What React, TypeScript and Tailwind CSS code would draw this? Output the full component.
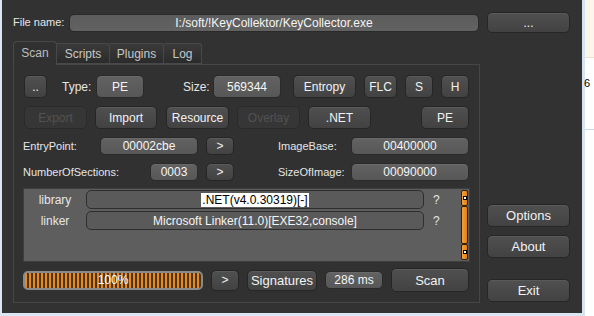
import React from "react";

const FONT = { fontFamily: '"Liberation Sans", Arial, sans-serif' };

function Btn({ cls, children, kind = "btn" }: { cls: string; children?: React.ReactNode; kind?: "btn" | "field" | "off" }) {
  const base =
    kind === "btn"
      ? "bg-[linear-gradient(#505050,#424242)] border-[#262626] text-[#f2f2f2] rounded-[5px] shadow-[inset_0_1px_0_#5a5a5a]"
      : kind === "field"
      ? "bg-[linear-gradient(#626262,#575757)] border-[#2a2a2a] text-[#f5f5f5] rounded-[5px] shadow-[inset_0_1px_0_#6a6a6a]"
      : "bg-[#363636] border-[#2a2a2a] text-[#525252] rounded-[5px]";
  return (
    <div className={`flex items-center justify-center border text-[12px] leading-none shrink-0 whitespace-nowrap ${base} ${cls}`}>
      {children}
    </div>
  );
}

function Label({ cls, children }: { cls: string; children: React.ReactNode }) {
  return <div className={`text-[11px] text-[#e6e6e6] leading-none shrink-0 whitespace-nowrap ${cls}`}>{children}</div>;
}

function ScrollSeg({ cls, dot }: { cls: string; dot?: boolean }) {
  return (
    <div className={`w-[7px] rounded-[2px] border border-[#3a2206] bg-[linear-gradient(90deg,#f4a23a,#e0801a)] flex items-center justify-center ${cls}`}>
      {dot && (
        <div className="w-[4px] h-[4px] bg-black flex items-center justify-center">
          <div className="w-[2px] h-[2px] bg-white" />
        </div>
      )}
    </div>
  );
}

export default function App() {
  return (
    <div style={FONT} className="w-[594px] h-[316px] bg-[#dae6f3] flex overflow-hidden">
      <div className="ml-[2px] w-[580px] h-[313px] bg-[#323232] pl-[11px] pt-[12px] flex flex-col">
        {/* File name row */}
        <div className="flex items-center h-[21px]">
          <Label cls="w-[56px]">File name:</Label>
          <div className="w-[410px] h-[18px] rounded-[5px] border border-[#2a2a2a] bg-[linear-gradient(#5c5c5c,#626262)] flex items-center justify-center text-[12px] text-[#f5f5f5] whitespace-nowrap">
            I:/soft/!KeyCollektor/KeyCollector.exe
          </div>
          <Btn cls="ml-[8px] w-[83px] h-[21px]">...</Btn>
        </div>

        <div className="flex mt-[7px]">
          {/* left column */}
          <div className="w-[467px] flex flex-col">
            {/* tabs */}
            <div className="flex items-end h-[24px] text-[12px]">
              <div className="w-[44px] h-[24px] border border-b-0 border-[#484848] rounded-t-[4px] bg-[#313131] flex items-center justify-center text-[#bdbdbd] relative z-10 -mb-px pb-[1px]">
                Scan
              </div>
              <div className="w-[53px] h-[21px] border border-l-0 border-[#484848] rounded-tr-[3px] bg-[linear-gradient(#3a3a3a,#2b2b2b)] flex items-center justify-center text-[#c8c8c8]">
                Scripts
              </div>
              <div className="w-[54px] h-[21px] border border-l-0 border-[#484848] rounded-tr-[3px] bg-[linear-gradient(#3a3a3a,#2b2b2b)] flex items-center justify-center text-[#c8c8c8]">
                Plugins
              </div>
              <div className="w-[38px] h-[21px] border border-l-0 border-[#484848] rounded-tr-[3px] bg-[linear-gradient(#3a3a3a,#2b2b2b)] flex items-center justify-center text-[#c8c8c8]">
                Log
              </div>
            </div>
            {/* panel */}
            <div className="h-[239px] border border-[#464646] bg-[#313131] pl-[10px] pt-[10px] flex flex-col">
              {/* row 1 */}
              <div className="flex items-center h-[23px]">
                <Btn cls="w-[23px] h-[23px]">..</Btn>
                <Label cls="ml-[15px] w-[34px] text-[12px]">Type:</Label>
                <Btn kind="field" cls="w-[48px] h-[23px]">PE</Btn>
                <Label cls="ml-[39px] w-[30px] text-[12px]">Size:</Label>
                <Btn kind="field" cls="w-[68px] h-[23px]">569344</Btn>
                <Btn cls="ml-[12px] w-[63px] h-[23px]">Entropy</Btn>
                <Btn cls="ml-[8px] w-[33px] h-[23px]">FLC</Btn>
                <Btn cls="ml-[8px] w-[28px] h-[23px]">S</Btn>
                <Btn cls="ml-[8px] w-[28px] h-[23px]">H</Btn>
              </div>
              {/* row 2 */}
              <div className="flex items-center h-[23px] mt-[8px]">
                <Btn kind="off" cls="w-[63px] h-[23px]">Export</Btn>
                <Btn cls="ml-[8px] w-[62px] h-[23px]">Import</Btn>
                <Btn cls="ml-[9px] w-[63px] h-[23px]">Resource</Btn>
                <Btn kind="off" cls="ml-[8px] w-[63px] h-[23px]">Overlay</Btn>
                <Btn cls="ml-[8px] w-[63px] h-[23px]">.NET</Btn>
                <Btn cls="ml-[50px] w-[48px] h-[23px]">PE</Btn>
              </div>
              {/* row 3 */}
              <div className="flex items-center h-[18px] mt-[8px] -ml-px">
                <Label cls="w-[77px]">EntryPoint:</Label>
                <Btn kind="field" cls="w-[98px] h-[18px]">00002cbe</Btn>
                <Btn cls="ml-[8px] w-[28px] h-[18px]">&gt;</Btn>
                <Label cls="ml-[44px] w-[73px]">ImageBase:</Label>
                <Btn kind="field" cls="w-[118px] h-[18px]">00400000</Btn>
              </div>
              {/* row 4 */}
              <div className="flex items-center h-[18px] mt-[8px] -ml-px">
                <Label cls="w-[127px]">NumberOfSections:</Label>
                <Btn kind="field" cls="w-[48px] h-[18px]">0003</Btn>
                <Btn cls="ml-[8px] w-[28px] h-[18px]">&gt;</Btn>
                <Label cls="ml-[44px] w-[73px]">SizeOfImage:</Label>
                <Btn kind="field" cls="w-[118px] h-[18px]">00090000</Btn>
              </div>
              {/* list box */}
              <div className="mt-[7px] -ml-px w-[447px] h-[74px] border border-[#3e3e3e] bg-[#5e5e5e] flex pt-[1px]">
                <div className="flex flex-col w-[438px]">
                  <div className="flex items-center h-[19px]">
                    <div className="w-[62px] text-center text-[12px] text-[#e6e6e6]">library</div>
                    <div className="w-[338px] h-[19px] rounded-[5px] border border-[#2e2e2e] bg-[#5a5a5a] flex items-center justify-center text-[12px] whitespace-nowrap">
                      <span className="bg-white text-black px-[1px] leading-[14px]">.NET(v4.0.30319)[-]</span>
                    </div>
                    <div className="ml-[9px] text-[12px] text-[#e6e6e6]">?</div>
                  </div>
                  <div className="flex items-center h-[19px] mt-[2px]">
                    <div className="w-[62px] text-center text-[12px] text-[#e6e6e6]">linker</div>
                    <div className="w-[338px] h-[19px] rounded-[5px] border border-[#2e2e2e] bg-[#5a5a5a] flex items-center justify-center text-[12px] text-[#f5f5f5] whitespace-nowrap">
                      Microsoft Linker(11.0)[EXE32,console]
                    </div>
                    <div className="ml-[9px] text-[12px] text-[#e6e6e6]">?</div>
                  </div>
                </div>
                <div className="flex flex-col ml-[-1px]">
                  <ScrollSeg cls="h-[16px]" dot />
                  <ScrollSeg cls="h-[38px]" />
                  <ScrollSeg cls="h-[16px]" dot />
                </div>
              </div>
              {/* bottom row */}
              <div className="flex items-center h-[24px] mt-[6px] -ml-px">
                <div className="w-[180px] h-[19px] rounded-[5px] border-2 border-[#8a8a8a] bg-[repeating-linear-gradient(90deg,#e8891c_0px,#e8891c_2px,#4a3420_2px,#4a3420_4px)] flex items-center justify-center text-[12px] text-white">
                  100%
                </div>
                <Btn cls="ml-[8px] w-[28px] h-[21px]">&gt;</Btn>
                <Btn cls="ml-[8px] w-[70px] h-[21px] text-[13px]">Signatures</Btn>
                <Btn kind="field" cls="ml-[8px] w-[58px] h-[18px]">286 ms</Btn>
                <Btn cls="ml-[8px] w-[78px] h-[24px] text-[13px]">Scan</Btn>
              </div>
            </div>
          </div>
          {/* right column */}
          <div className="ml-[7px] w-[83px] flex flex-col pt-[164px]">
            <Btn cls="w-[83px] h-[23px] text-[13px]">Options</Btn>
            <Btn cls="mt-[8px] w-[83px] h-[23px] text-[13px]">About</Btn>
            <Btn cls="mt-[21px] w-[83px] h-[23px] text-[13px]">Exit</Btn>
          </div>
        </div>
      </div>
      <div className="w-[3px] h-full bg-[#d6e3f1]" />
      <div className="flex-1 h-full bg-white flex flex-col">
        <div className="h-[58px] bg-[#fcf5ec] border-b border-[#f0e0cc]" />
        <div className="mt-[20px] text-[11px] text-black leading-none -ml-[1px]">6</div>
        <div className="mt-[40px] h-[1px] bg-[#c9d8ea]" />
      </div>
    </div>
  );
}
